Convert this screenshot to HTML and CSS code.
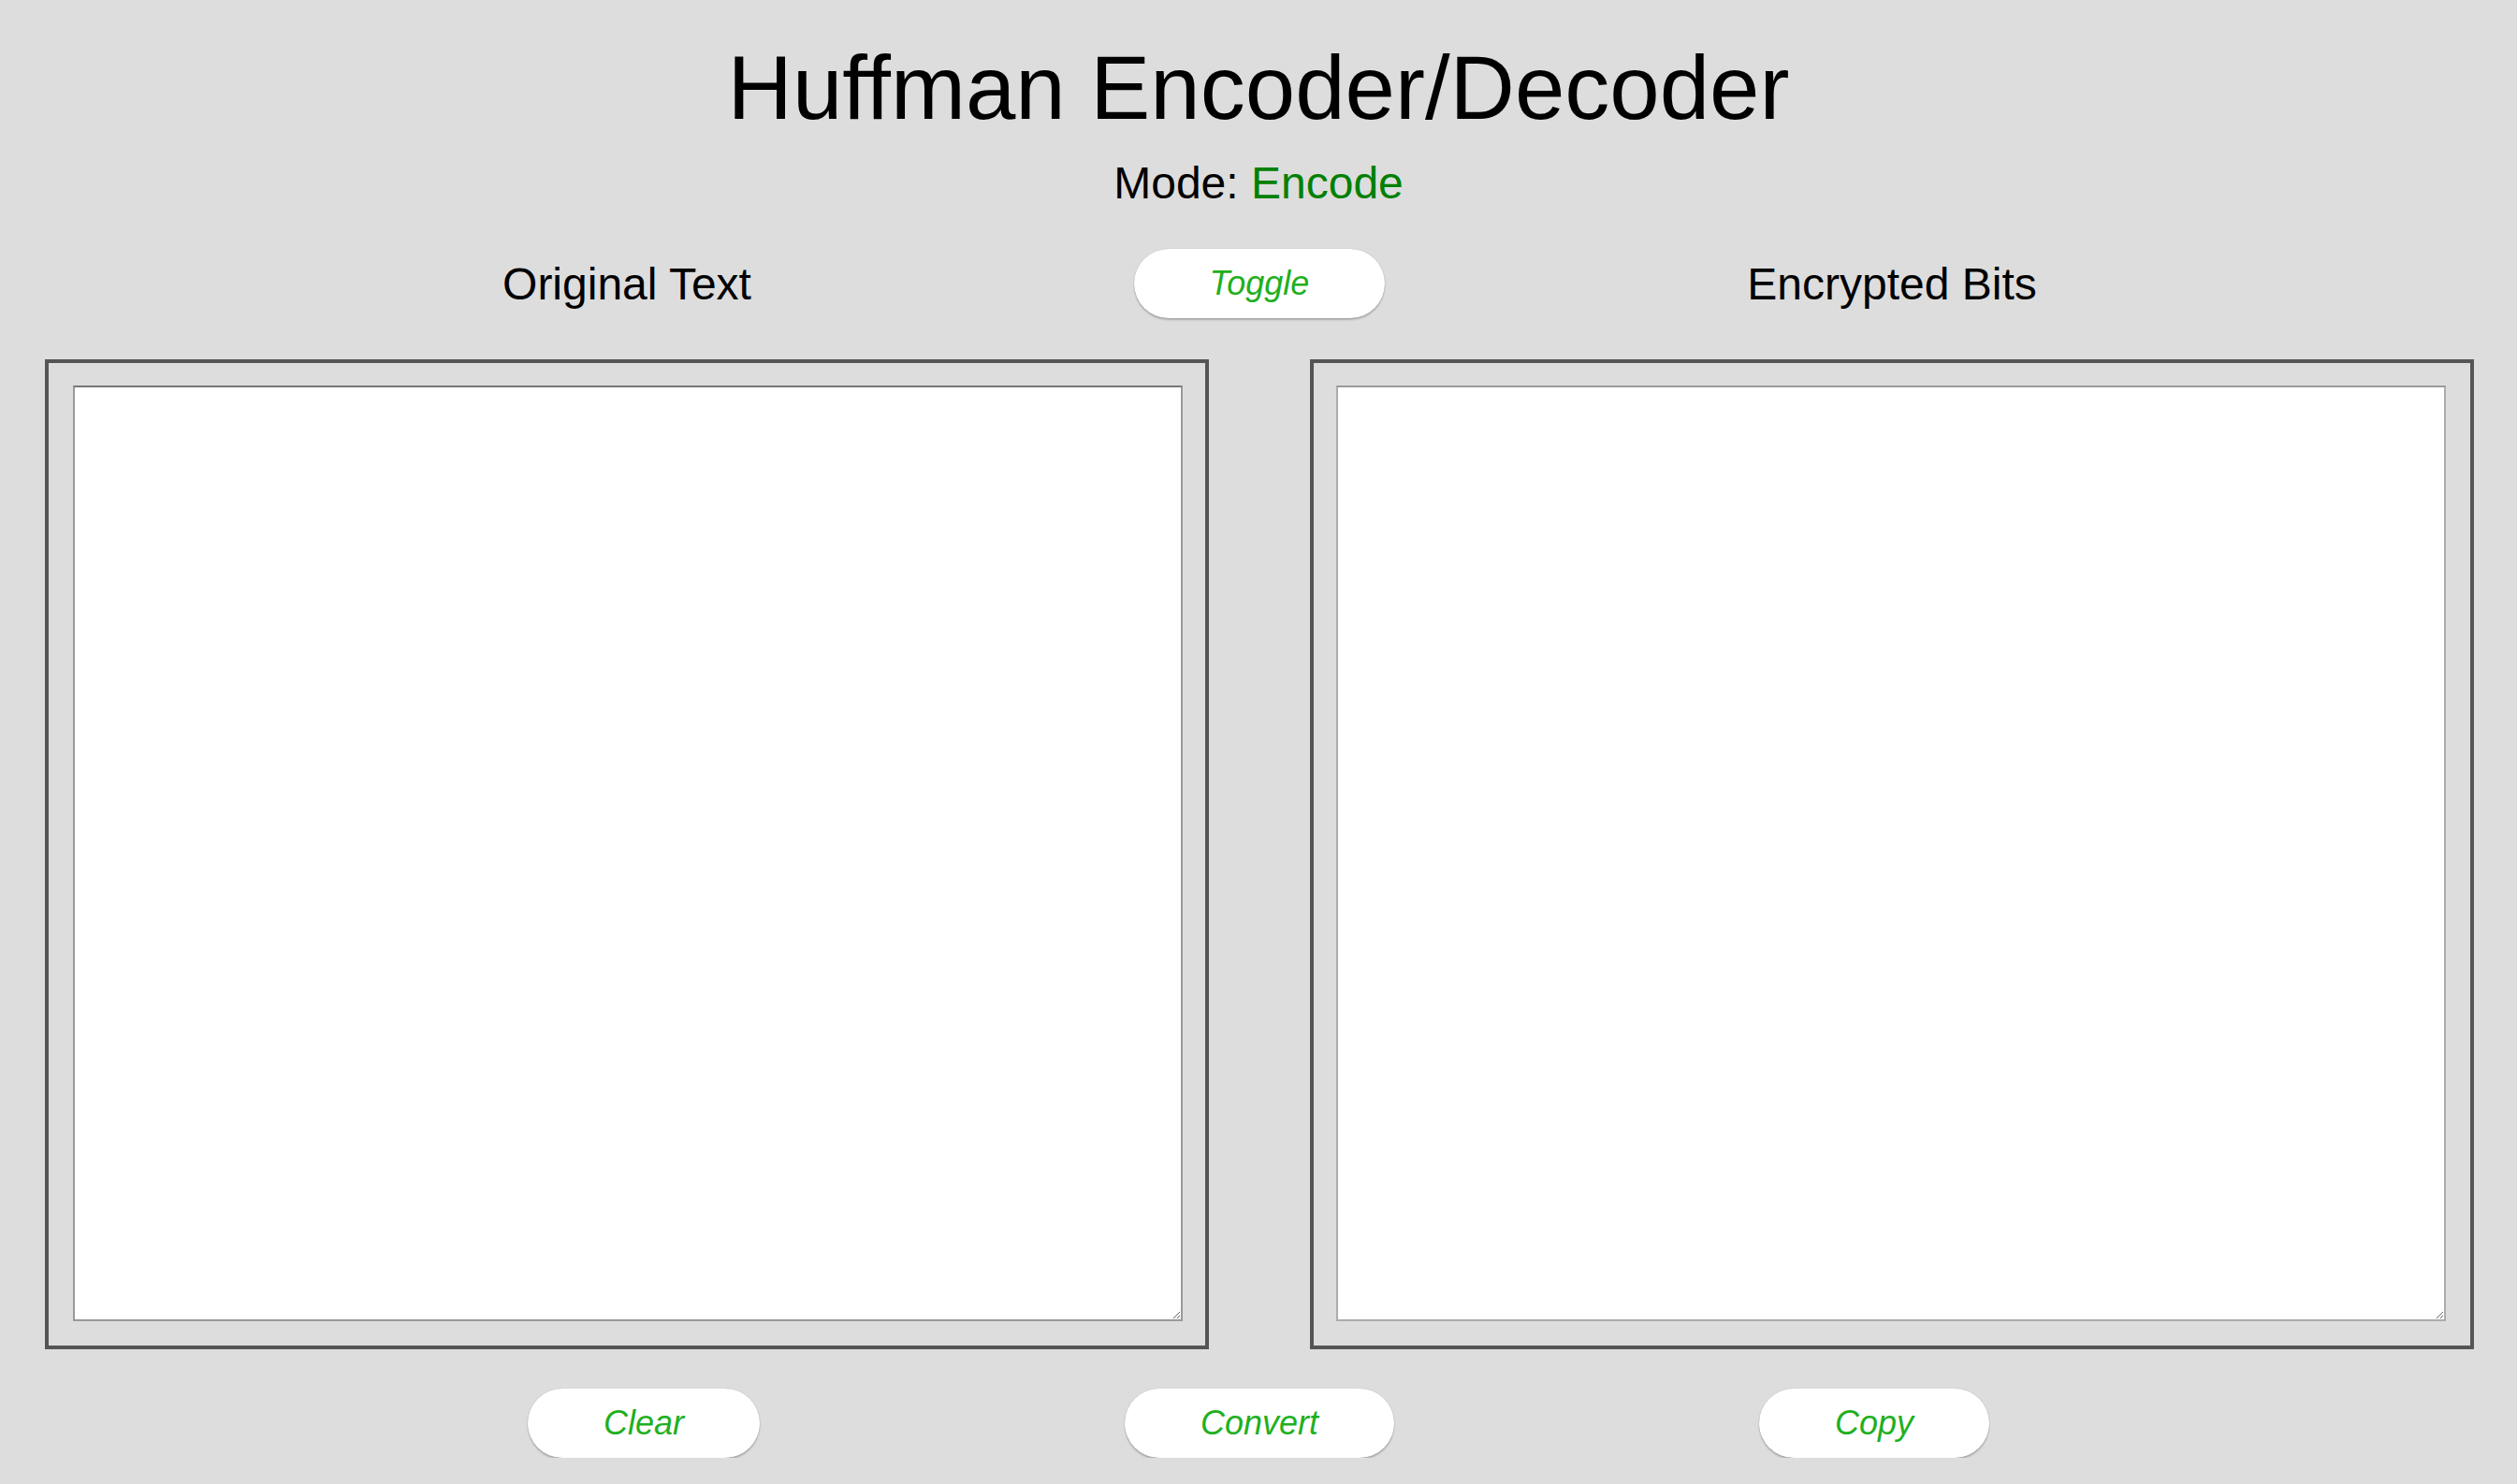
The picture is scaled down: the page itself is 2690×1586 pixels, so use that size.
FILE: index.html
```html
<!DOCTYPE html>
<html lang="en">
<head>
<meta charset="utf-8">
<title>Huffman Encoder/Decoder</title>
<link rel="stylesheet" href="styles.css">
</head>
<body>
<h1 class="title">Huffman Encoder/Decoder</h1>
<p class="mode">Mode: <span class="mode-value">Encode</span></p>
<div class="label-row">
  <div class="pane-label">Original Text</div>
  <div class="middle"><button class="pill">Toggle</button></div>
  <div class="pane-label">Encrypted Bits</div>
</div>
<div class="panes">
  <div class="pane"><textarea class="text text-focus"></textarea></div>
  <div class="pane pane-right"><textarea class="text"></textarea></div>
</div>
<div class="actions">
  <button class="pill">Clear</button>
  <button class="pill">Convert</button>
  <button class="pill">Copy</button>
</div>
</body>
</html>
```
FILE: styles.css
```css
html, body {
  margin: 0;
  padding: 0;
  background: #dddddd;
}
body {
  font-family: "Liberation Sans", Arial, Helvetica, sans-serif;
  color: #000;
}
.title {
  margin: 39px 0 0;
  font-size: 96px;
  font-weight: normal;
  line-height: 110px;
  text-align: center;
}
.mode {
  margin: 19px 0 0;
  font-size: 48px;
  line-height: 56px;
  text-align: center;
}
.mode-value {
  color: #008000;
}
.label-row {
  display: flex;
  align-items: center;
  margin-top: 42px;
  padding: 0 46px 0 48px;
  height: 74px;
}
.pane-label {
  width: 1244px;
  flex: 0 0 1244px;
  text-align: center;
  font-size: 48px;
  line-height: normal;
}
.middle {
  flex: 0 0 108px;
  width: 108px;
  min-width: 0;
  display: flex;
  justify-content: center;
}
.pill {
  flex: 0 0 auto;
  height: 74px;
  padding: 0 81px;
  border: none;
  border-radius: 37px;
  background: #ffffff;
  box-shadow: 0 2px 2px rgba(0, 0, 0, 0.22), 0 0 1px rgba(0, 0, 0, 0.25);
  font-family: "Liberation Sans", Arial, Helvetica, sans-serif;
  font-style: italic;
  font-size: 36px;
  color: #1fb01f;
  cursor: pointer;
}
.panes {
  display: flex;
  gap: 108px;
  margin-top: 44px;
  padding: 0 46px 0 48px;
}
.pane {
  flex: 0 0 1244px;
  box-sizing: border-box;
  width: 1244px;
  border: 4px solid #555555;
  padding: 24px 24px 26px 26px;
  display: flex;
}
.pane-right {
  padding: 24px 26px 26px 24px;
}
.text {
  box-sizing: border-box;
  width: 1186px;
  height: 1000px;
  margin: 0;
  background: #ffffff;
  border: 2px solid;
  border-color: #9a9a9a #acacac #acacac #acacac;
  outline: none;
  font-family: "Liberation Mono", monospace;
  font-size: 26px;
}
.text-focus {
  border-color: #777777 #999999 #999999 #999999;
}
.actions {
  display: flex;
  justify-content: center;
  gap: 390px;
  margin-top: 42px;
}
```
